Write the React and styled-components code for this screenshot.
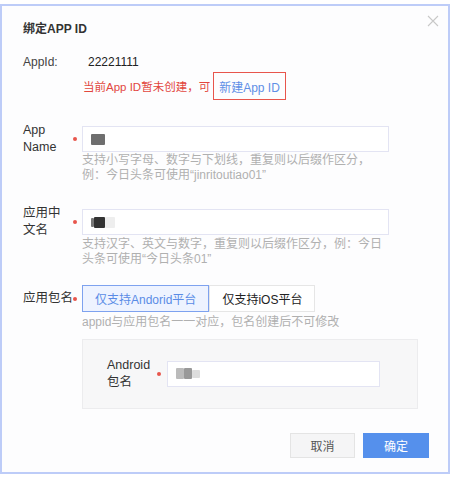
import React from "react";
import styled, { createGlobalStyle } from "styled-components";

const Global = createGlobalStyle`
  html, body { margin: 0; padding: 0; background: #ffffff; }
  body { font-family: "Liberation Sans", "Noto Sans CJK SC", sans-serif; font-size: 12px; color: #333; }
`;

const Frame = styled.div`
  box-sizing: border-box;
  margin-top: 4px;
  width: 450px;
  height: 470px;
  border: 2px solid #bdccf8;
  background: #fdfdfe;
  position: relative;
  padding: 14px 19px 0 21px;
  display: flex;
  flex-direction: column;
`;

const Close = styled.div`
  position: absolute;
  top: 8px;
  right: 8px;
  width: 14px;
  height: 14px;
  color: #c8c8c8;
`;

const Title = styled.div`
  font-weight: bold;
  font-size: 12px;
  line-height: 18px;
  color: #333;
`;

const InfoRow = styled.div`
  display: flex;
  margin-top: ${(p) => p.$mt || 0}px;
  line-height: 18px;
  align-items: center;
`;

const InfoLabel = styled.div`
  width: 65px;
  color: #444;
`;

const InfoValue = styled.div`
  color: #222;
`;

const HintRow = styled.div`
  display: flex;
  align-items: center;
  margin: 1px 0 0 60px;
  height: 28px;
`;

const HintText = styled.span`
  color: #e2473e;
  font-size: 11.5px;
`;

const LinkBox = styled.span`
  margin-left: 3px;
  box-sizing: border-box;
  height: 28px;
  padding: 0 5px;
  border: 1.5px solid #e8554c;
  display: flex;
  align-items: center;
  color: #5f8fe6;
  font-size: 12px;
`;

const FormRow = styled.div`
  display: flex;
  align-items: flex-start;
  margin-top: ${(p) => p.$mt || 0}px;
`;

const Label = styled.div`
  width: ${(p) => p.$w || 59}px;
  flex: none;
  height: ${(p) => p.$h || 26}px;
  display: flex;
  align-items: center;
`;

const LabelText = styled.div`
  width: ${(p) => p.$w || 50}px;
  color: #333;
  font-size: 12.5px;
  line-height: 17px;
  white-space: nowrap;
`;

const Star = styled.span`
  width: 4px;
  height: 4px;
  border-radius: 50%;
  background: #e8554c;
  display: inline-block;
`;

const Field = styled.div`
  display: flex;
  flex-direction: column;
`;

const Input = styled.div`
  box-sizing: border-box;
  width: ${(p) => p.$w || 307}px;
  height: 26px;
  border: 1px solid #e3e4f3;
  background: #fff;
  display: flex;
  align-items: center;
  padding-left: 8px;
`;

const Blur = styled.span`
  display: inline-block;
  width: ${(p) => p.$w}px;
  height: ${(p) => p.$h}px;
  background: ${(p) => p.$c};
  filter: blur(0.6px);
  border-radius: 1px;
`;

const Help = styled.div`
  color: #b0b0b0;
  font-size: 12px;
  line-height: 14.5px;
  margin-top: ${(p) => p.$mt || 4}px;
`;

const Segmented = styled.div`
  display: flex;
`;

const SegButton = styled.div`
  box-sizing: border-box;
  height: 27px;
  padding: 0 12px;
  display: flex;
  align-items: center;
  font-size: 12px;
  border: 1px solid ${(p) => (p.$active ? "#7ea2ef" : "#e6e6e6")};
  background: ${(p) => (p.$active ? "#eef3ff" : "#fff")};
  color: ${(p) => (p.$active ? "#5a8be6" : "#222")};
`;

const SubPanel = styled.div`
  box-sizing: border-box;
  margin: 9px 0 0 59px;
  width: 336px;
  height: 70px;
  background: #f7f7f8;
  border: 1px solid #ececee;
  display: flex;
  align-items: center;
  padding-left: 24px;
`;

const Footer = styled.div`
  display: flex;
  justify-content: flex-end;
  gap: 8px;
  margin-top: 24px;
`;

const Button = styled.div`
  box-sizing: border-box;
  width: ${(p) => p.$w}px;
  height: 25px;
  display: flex;
  align-items: center;
  justify-content: center;
  font-size: 12px;
  border: 1px solid ${(p) => (p.$primary ? "#5590ec" : "#e4e4e4")};
  background: ${(p) => (p.$primary ? "#5590ec" : "#f5f5f6")};
  color: ${(p) => (p.$primary ? "#ffffff" : "#555")};
`;

export default function App() {
  return (
    <>
      <Global />
      <Frame>
        <Close>
          <svg width="14" height="14" viewBox="0 0 14 14">
            <path d="M2 2 L12 12 M12 2 L2 12" stroke="currentColor" strokeWidth="1.1" fill="none" />
          </svg>
        </Close>
        <Title>绑定APP ID</Title>
        <InfoRow $mt={15}>
          <InfoLabel>AppId:</InfoLabel>
          <InfoValue>22221111</InfoValue>
        </InfoRow>
        <HintRow>
          <HintText>当前App ID暂未创建，可</HintText>
          <LinkBox>新建App ID</LinkBox>
        </HintRow>

        <FormRow $mt={26}>
          <Label>
            <LabelText>App<br />Name</LabelText>
            <Star />
          </Label>
          <Field>
            <Input>
              <Blur $w={14} $h={11} $c="#6e6e6e" />
            </Input>
            <Help $mt={1}>
              支持小写字母、数字与下划线，重复则以后缀作区分，<br />
              例：今日头条可使用“jinritoutiao01”
            </Help>
          </Field>
        </FormRow>

        <FormRow $mt={27}>
          <Label>
            <LabelText>应用中<br />文名</LabelText>
            <Star />
          </Label>
          <Field>
            <Input>
              <Blur $w={3} $h={9} $c="#777" />
              <Blur $w={11} $h={11} $c="#333" />
              <Blur $w={10} $h={11} $c="#eee" />
            </Input>
            <Help $mt={2}>
              支持汉字、英文与数字，重复则以后缀作区分，例：今日<br />
              头条可使用“今日头条01”
            </Help>
          </Field>
        </FormRow>

        <FormRow $mt={19}>
          <Label $h={27}>
            <LabelText>应用包名</LabelText>
            <Star />
          </Label>
          <Field>
            <Segmented>
              <SegButton $active>仅支持Andorid平台</SegButton>
              <SegButton>仅支持iOS平台</SegButton>
            </Segmented>
            <Help $mt={3}>appid与应用包名一一对应，包名创建后不可修改</Help>
          </Field>
        </FormRow>

        <SubPanel>
          <Label $w={60}>
            <LabelText>Android<br />包名</LabelText>
            <Star />
          </Label>
          <Input $w={213}>
            <Blur $w={8} $h={11} $c="#bbb" />
            <Blur $w={8} $h={11} $c="#999" />
            <Blur $w={8} $h={8} $c="#ddd" />
          </Input>
        </SubPanel>

        <Footer>
          <Button $w={65}>取消</Button>
          <Button $w={66} $primary>确定</Button>
        </Footer>
      </Frame>
    </>
  );
}
